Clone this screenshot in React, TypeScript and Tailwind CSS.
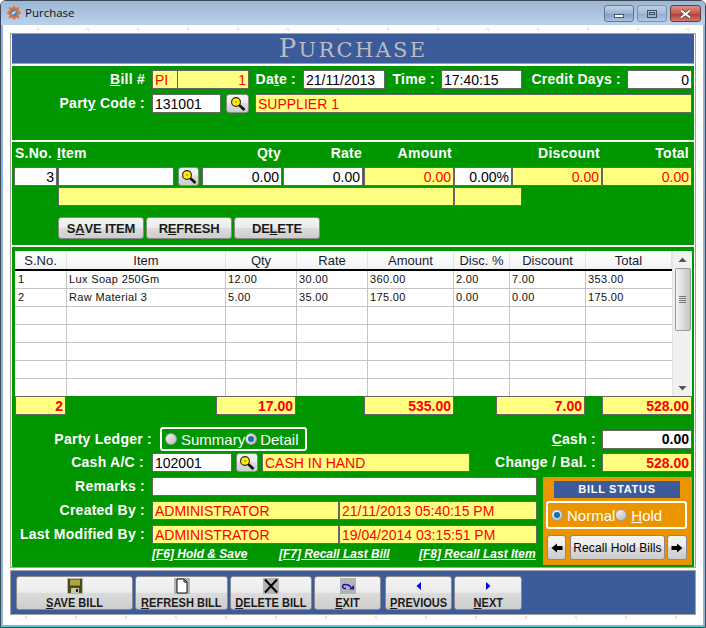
import React from 'react';

const btnBg = 'bg-[linear-gradient(#f4f4f4_0%,#ebebeb_48%,#dcdcdc_50%,#cdcdcd_100%)]';

const Field = ({ w, value = '', tone = 'white', right = false, bold = false, cls = '' }: {
  w: string; value?: string; tone?: 'white' | 'yellow'; right?: boolean; bold?: boolean; cls?: string;
}) => (
  <div
    className={`${w} ${cls} h-[19px] shrink-0 border border-[#666666] flex items-center overflow-hidden whitespace-nowrap text-[14px] leading-none px-[2px] ${
      tone === 'yellow' ? 'bg-[#ffff80] text-[#ff0000]' : 'bg-white text-black'
    } ${right ? 'justify-end' : ''} ${bold ? 'font-bold' : ''}`}
  >
    {value}
  </div>
);

const Label = ({ w, children, cls = '' }: { w: string; children: React.ReactNode; cls?: string }) => (
  <div className={`${w} ${cls} -mt-px shrink-0 text-right text-white font-bold text-[14px] leading-none tracking-[0.25px] whitespace-nowrap`}>
    {children}
  </div>
);

const SearchBtn = ({ w, cls = '' }: { w: string; cls?: string }) => (
  <div className={`${w} ${cls} ${btnBg} h-[19px] shrink-0 border border-[#8a8a8a] rounded-[3px] flex items-center justify-center`}>
    <svg width="16" height="16" viewBox="0 0 16 16">
      <path d="M8.5 8.5 14.5 14" stroke="#111111" strokeWidth="2.6" />
      <circle cx="6" cy="6" r="4.4" fill="#ffee00" stroke="#222222" strokeWidth="1.1" />
      <circle cx="6" cy="6" r="1" fill="#a89600" />
    </svg>
  </div>
);

const Radio = ({ on }: { on?: boolean }) => (
  <span className="w-[12px] h-[12px] shrink-0 rounded-full border border-[#9a9a9a] bg-[linear-gradient(135deg,#f2f2f2,#bcbcbc)] flex items-center justify-center">
    {on && <span className="w-[6px] h-[6px] rounded-full bg-[#1c6fb0]" />}
  </span>
);

const ActionBtn = ({ w, first, rest, pre = '' }: { w: string; first: string; rest: string; pre?: string }) => (
  <div className={`${w} ${btnBg} h-[22px] shrink-0 border border-[#8a8a8a] rounded-[3px] flex items-center justify-center text-[13px] font-bold tracking-[-0.2px] text-[#1a1a1a] leading-none`}>
    {pre}<span className="underline">{first}</span>{rest}
  </div>
);

const BarBtn = ({ w, icon, first, rest }: { w: string; icon: React.ReactNode; first: string; rest: string }) => (
  <div className={`${w} ${btnBg} h-[34px] shrink-0 border border-[#8a8a8a] rounded-[3px] flex flex-col items-center text-[13px] font-bold text-[#1a1a1a] leading-none whitespace-nowrap`}>
    <div className="h-[16px] flex items-center justify-center mt-[1px]">{icon}</div>
    <div className="mt-[2px] scale-x-[0.85]"><span className="underline">{first}</span>{rest}</div>
  </div>
);

const cols = [
  { name: 'S.No.', w: 'w-[52px]' },
  { name: 'Item', w: 'w-[159px]' },
  { name: 'Qty', w: 'w-[71px]' },
  { name: 'Rate', w: 'w-[71px]' },
  { name: 'Amount', w: 'w-[86px]' },
  { name: 'Disc. %', w: 'w-[56px]' },
  { name: 'Discount', w: 'w-[76px]' },
  { name: 'Total', w: 'w-[86px]' },
];

const rows = [
  ['1', 'Lux Soap 250Gm', '12.00', '30.00', '360.00', '2.00', '7.00', '353.00'],
  ['2', 'Raw Material 3', '5.00', '35.00', '175.00', '0.00', '0.00', '175.00'],
  ['', '', '', '', '', '', '', ''],
  ['', '', '', '', '', '', '', ''],
  ['', '', '', '', '', '', '', ''],
  ['', '', '', '', '', '', '', ''],
  ['', '', '', '', '', '', '', ''],
];

const ticks = Array.from({ length: 14 });

const TickRow = ({ cls }: { cls: string }) => (
  <div className={`${cls} h-[4px] flex gap-[47px]`}>
    {ticks.map((_, i) => (
      <svg key={i} width="3" height="4" viewBox="0 0 3 4" className="shrink-0">
        <path d="M0 0h3v4z" fill="#f6dcd2" />
      </svg>
    ))}
  </div>
);

export default function App() {
  return (
    <div className="w-[706px] h-[628px] overflow-hidden bg-white font-['Liberation_Sans',Arial,sans-serif] border border-[#3b4654] rounded-t-[6px] flex flex-col">
      {/* title bar */}
      <div className="h-[24px] shrink-0 bg-[linear-gradient(#9db6d2,#bad2eb)] flex items-center">
        <svg width="16" height="16" viewBox="0 0 16 16" className="ml-[5px] shrink-0">
          <path d="M8 0.5l2 2.5 3.5-1-1 3.5 3 2.5-3 2 1 3.5-3.5-1-2 2.5-2-2.5-3.5 1 1-3.5-3-2 3-2.5-1-3.5 3.5 1z" fill="#e8702e" />
          <circle cx="8" cy="8" r="3.4" fill="#4f86b8" />
          <path d="M5.5 9.5c1-3 3-3.500 5-3-1.500.5-2 1.500-2.500 2.500z" fill="#f0f0f0" />
        </svg>
        <div className="ml-[3px] text-[11.5px] font-['Open_Sans',sans-serif] text-[#111111]">Purchase</div>
        <div className="ml-auto mr-[4px] flex gap-[3px] items-start self-start mt-[4px]">
          <div className="w-[30px] h-[17px] rounded-[3px] border border-[#5f7894] bg-[linear-gradient(#c3d4e7,#98b3d1_50%,#7f9dc0_52%,#a9c2dd)] flex items-end justify-center pb-[3px]">
            <div className="w-[10px] h-[4px] bg-white border border-[#44566c]" />
          </div>
          <div className="w-[30px] h-[17px] rounded-[3px] border border-[#7a93af] bg-[linear-gradient(#bed0e4,#a3bbd6_50%,#90abca_52%,#b0c8e2)] flex items-center justify-center">
            <div className="w-[10px] h-[8px] border border-[#3f4e60] flex items-center justify-center">
              <div className="w-[6px] h-[3px] border border-[#3f4e60]" />
            </div>
          </div>
          <div className="w-[31px] h-[17px] rounded-[3px] border border-[#6f3a38] bg-[linear-gradient(#d9938a,#c8574b_50%,#b23a2f_52%,#cf7a6c)] flex items-center justify-center">
            <svg width="13" height="10" viewBox="0 0 13 10">
              <path d="M2 1.5 11 8.5M11 1.5 2 8.5" stroke="#44302e" strokeWidth="3.4" />
              <path d="M2 1.5 11 8.5M11 1.5 2 8.5" stroke="#ffffff" strokeWidth="2.2" />
            </svg>
          </div>
        </div>
      </div>

      {/* window body */}
      <div className="flex-1 border-x-2 border-b-2 border-x-[#8db7de] border-b-[#62c4e4] flex flex-col pl-[7px]">
        <TickRow cls="mt-[3px] pl-[26px]" />
        <div className="w-[686px] mt-px border border-[#a3a3a3] flex flex-col gap-[2px] px-px">
          {/* heading */}
          <div className="h-[30px] bg-[#3c5b9a] border-b border-[#a3a3a3] flex items-baseline justify-center pt-[1px] font-['DejaVu_Serif',serif] text-[#bcbcc4] leading-none tracking-[2.3px]">
            <span className="text-[26px]">P</span>
            <span className="text-[21px]">URCHASE</span>
          </div>

          {/* bill details */}
          <div className="h-[74px] bg-[#009600] pt-[4px] flex flex-col gap-[5px]">
            <div className="flex items-center h-[19px]">
              <Label w="w-[133px]"><span className="underline">B</span>ill #</Label>
              <div className="ml-[7px] w-[97px] shrink-0 flex">
                <Field w="w-[26px]" tone="yellow" value="PI" />
                <Field w="w-[71px]" tone="yellow" right value="1" cls="border-l-0" />
              </div>
              <Label w="w-[47px]">Da<span className="underline">t</span>e :</Label>
              <Field w="w-[82px]" value="21/11/2013" cls="ml-[7px]" />
              <Label w="w-[50px]">Time :</Label>
              <Field w="w-[81px]" value="17:40:15" cls="ml-[6px]" />
              <Label w="w-[99px]">Credit Days :</Label>
              <Field w="w-[65px]" value="0" right cls="ml-[6px]" />
            </div>
            <div className="flex items-center h-[19px]">
              <Label w="w-[133px]">Part<span className="underline">y</span> Code :</Label>
              <Field w="w-[69px]" value="131001" cls="ml-[7px]" />
              <SearchBtn w="w-[23px]" cls="ml-[5px]" />
              <Field w="w-[437px]" tone="yellow" value="SUPPLIER 1" cls="ml-[6px]" />
            </div>
          </div>

          {/* item entry */}
          <div className="h-[103px] bg-[#009600]">
            <div className="h-[22px] flex items-center pl-[3px] text-white font-bold text-[14px] leading-none tracking-[0.25px]">
              <div className="w-[42px] shrink-0 whitespace-nowrap">S.No.</div>
              <div className="w-[100px] shrink-0"><span className="underline">I</span>tem</div>
              <div className="w-[124px] shrink-0 text-right">Qty</div>
              <div className="w-[81px] shrink-0 text-right">Rate</div>
              <div className="w-[90px] shrink-0 text-right">Amount</div>
              <div className="w-[148px] shrink-0 text-right">Discount</div>
              <div className="w-[89px] shrink-0 text-right">Total</div>
            </div>
            <div className="flex items-center pl-[2px] mt-[3px]">
              <Field w="w-[43px]" value="3" right />
              <Field w="w-[116px]" cls="ml-px" />
              <SearchBtn w="w-[21px]" cls="ml-[4px]" />
              <Field w="w-[80px]" value="0.00" right cls="ml-[3px]" />
              <Field w="w-[80px]" value="0.00" right cls="ml-px" />
              <Field w="w-[90px]" tone="yellow" value="0.00" right cls="ml-px" />
              <Field w="w-[58px]" value="0.00%" right />
              <Field w="w-[90px]" tone="yellow" value="0.00" right />
              <Field w="w-[90px]" tone="yellow" value="0.00" right />
            </div>
            <div className="flex mt-[1px] pl-[46px]">
              <Field w="w-[396px]" tone="yellow" />
              <Field w="w-[68px]" tone="yellow" />
            </div>
            <div className="flex gap-[2px] mt-[11px] pl-[46px]">
              <ActionBtn w="w-[86px]" pre="S" first="A" rest="VE ITEM" />
              <ActionBtn w="w-[86px]" pre="R" first="E" rest="FRESH" />
              <ActionBtn w="w-[86px]" pre="DE" first="L" rest="ETE" />
            </div>
          </div>

          {/* grid and totals */}
          <div className="h-[320px] bg-[#009600] pt-[4px]">
            <div className="ml-[3px] w-[677px] h-[145px] overflow-hidden bg-white flex">
              <div className="w-[657px] shrink-0">
                <div className="h-[20px] flex border-b-2 border-black bg-[linear-gradient(#ffffff,#f7f8f9_60%,#eef0f2)] text-[13px] text-[#1a1a2e] leading-none">
                  {cols.map((c) => (
                    <div key={c.name} className={`${c.w} shrink-0 flex items-center justify-center border-r border-[#dfe3e8]`}>{c.name}</div>
                  ))}
                </div>
                {rows.map((r, i) => (
                  <div key={i} className="h-[18px] flex border-b border-[#c4c4c4] text-[11px] tracking-[0.35px] text-[#111111] leading-none">
                    {r.map((v, j) => (
                      <div key={j} className={`${cols[j].w} shrink-0 flex items-center pl-[2px] first:pl-[3px] border-r border-[#c4c4c4] last:border-r-0`}>{v}</div>
                    ))}
                  </div>
                ))}
              </div>
              <div className="w-[20px] shrink-0 bg-[#f0f0f0] flex flex-col items-center border-l border-[#e4e4e4]">
                <svg width="9" height="5" viewBox="0 0 9 5" className="mt-[6px] shrink-0"><path d="M0.5 5 4.5 0.5 8.5 5z" fill="#555555" /></svg>
                <div className="w-[16px] h-[63px] mt-[6px] rounded-[2px] border border-[#9a9a9a] bg-[linear-gradient(90deg,#f5f5f5,#d8d8d8_55%,#c4c4c4)] flex flex-col items-center justify-center gap-px">
                  <div className="w-[7px] h-px bg-[#777777]" />
                  <div className="w-[7px] h-px bg-[#777777]" />
                  <div className="w-[7px] h-px bg-[#777777]" />
                  <div className="w-[7px] h-px bg-[#777777]" />
                </div>
                <svg width="9" height="5" viewBox="0 0 9 5" className="mt-auto mb-[5px] shrink-0"><path d="M0.5 0 4.5 4.5 8.5 0z" fill="#555555" /></svg>
              </div>
            </div>
            <div className="flex h-[19px] pl-[3px]">
              <Field w="w-[51px]" tone="yellow" value="2" right bold />
              <Field w="w-[80px]" tone="yellow" value="17.00" right bold cls="ml-[150px]" />
              <Field w="w-[90px]" tone="yellow" value="535.00" right bold cls="ml-[68px]" />
              <Field w="w-[89px]" tone="yellow" value="7.00" right bold cls="ml-[42px]" />
              <Field w="w-[90px]" tone="yellow" value="528.00" right bold cls="ml-[17px]" />
            </div>

            <div className="flex items-center h-[24px] mt-[12px]">
              <Label w="w-[140px]">Party Ledger :</Label>
              <div className="ml-[8px] w-[147px] h-[24px] shrink-0 border-2 border-white rounded-[3px] flex items-center pl-[3px] text-white text-[15px] leading-none">
                <Radio />
                <span className="ml-[4px]">Summary</span>
                <Radio on />
                <span className="ml-[3px]">Detail</span>
              </div>
              <Label w="w-[289px]"><span className="underline">C</span>ash :</Label>
              <Field w="w-[90px]" value="0.00" right bold cls="ml-[6px]" />
            </div>
            <div className="flex items-center h-[19px] mt-[2px]">
              <Label w="w-[132px]">Cash A/C :</Label>
              <Field w="w-[80px]" value="102001" cls="ml-[8px]" />
              <SearchBtn w="w-[22px]" cls="ml-[4px]" />
              <Field w="w-[208px]" tone="yellow" value="CASH IN HAND" cls="ml-[4px]" />
              <Label w="w-[126px]">Change / Bal. :</Label>
              <Field w="w-[90px]" tone="yellow" value="528.00" right bold cls="ml-[6px]" />
            </div>

            <div className="flex mt-[5px]">
              <div className="flex flex-col gap-[5px] w-[525px] shrink-0">
                <div className="flex items-center h-[19px]">
                  <Label w="w-[133px]">Remarks :</Label>
                  <Field w="w-[385px]" cls="ml-[7px]" />
                </div>
                <div className="flex items-center h-[19px]">
                  <Label w="w-[133px]">Created By :</Label>
                  <Field w="w-[187px]" tone="yellow" value="ADMINISTRATOR" cls="ml-[7px]" />
                  <Field w="w-[198px]" tone="yellow" value="21/11/2013 05:40:15 PM" />
                </div>
                <div className="flex items-center h-[19px]">
                  <Label w="w-[133px]">Last Modified By :</Label>
                  <Field w="w-[187px]" tone="yellow" value="ADMINISTRATOR" cls="ml-[7px]" />
                  <Field w="w-[198px]" tone="yellow" value="19/04/2014 03:15:51 PM" />
                </div>
                <div className="flex -mt-[1px] pl-[140px] text-white font-bold italic underline text-[12px] leading-none whitespace-nowrap">
                  <span className="w-[127px] shrink-0">[F6] Hold &amp; Save</span>
                  <span className="w-[140px] shrink-0">[F7] Recall Last Bill</span>
                  <span>[F8] Recall Last Item</span>
                </div>
              </div>
              <div className="ml-[6px] w-[149px] h-[88px] shrink-0 bg-[#ea9500] pt-[4px]">
                <div className="ml-[11px] w-[126px] h-[17px] bg-[#3c5b9a] flex items-center justify-center text-white font-bold text-[11px] tracking-[0.7px] leading-none">
                  BILL STATUS
                </div>
                <div className="ml-[3px] mt-[3px] w-[141px] h-[28px] border-2 border-white rounded-[3px] flex items-center pl-[3px] text-white text-[15px] leading-none">
                  <Radio on />
                  <span className="ml-[4px]">Normal</span>
                  <Radio />
                  <span className="ml-[4px]"><span className="underline">H</span>old</span>
                </div>
                <div className="flex mt-[6px] pl-[4px] h-[25px] items-stretch">
                  <div className={`w-[19px] shrink-0 ${btnBg} border border-[#8a8a8a] rounded-[3px] flex items-center justify-center`}>
                    <svg width="12" height="10" viewBox="0 0 12 10"><path d="M0.5 5 6 0.5V3H11.5V7H6V9.5z" fill="#000000" /></svg>
                  </div>
                  <div className={`w-[95px] ml-[4px] shrink-0 ${btnBg} border border-[#8a8a8a] rounded-[3px] flex items-center justify-center text-[12px] tracking-[0.1px] text-black whitespace-nowrap leading-none`}>
                    Recall Hold Bills
                  </div>
                  <div className={`w-[20px] ml-[2px] shrink-0 ${btnBg} border border-[#8a8a8a] rounded-[3px] flex items-center justify-center`}>
                    <svg width="12" height="10" viewBox="0 0 12 10"><path d="M11.5 5 6 0.5V3H0.5V7H6V9.5z" fill="#000000" /></svg>
                  </div>
                </div>
              </div>
            </div>
          </div>
        </div>

        {/* bottom bar */}
        <div className="w-[686px] mt-[2px] h-[45px] border border-[#a3a3a3] bg-[#3c5b9a] flex items-start pt-[5px] pl-[5px] gap-[2px]">
          <BarBtn
            w="w-[117px]"
            first="S"
            rest="AVE BILL"
            icon={
              <svg width="16" height="16" viewBox="0 0 16 16">
                <rect width="16" height="16" fill="#b4b4b4" />
                <rect x="1" y="1" width="14" height="14" fill="#4a4a10" />
                <rect x="3" y="1.5" width="10" height="6" fill="#a8a83c" />
                <rect x="4" y="10" width="8" height="5" fill="#c8c8b0" />
                <rect x="9" y="11" width="2" height="3" fill="#222222" />
              </svg>
            }
          />
          <BarBtn
            w="w-[93px]"
            first="R"
            rest="EFRESH BILL"
            icon={
              <svg width="16" height="16" viewBox="0 0 16 16">
                <rect width="16" height="16" fill="#b4b4b4" />
                <path d="M3 1h7l3 3v11H3z" fill="#ffffff" stroke="#111111" />
                <path d="M10 1v3h3" fill="none" stroke="#111111" />
              </svg>
            }
          />
          <BarBtn
            w="w-[82px]"
            first="D"
            rest="ELETE BILL"
            icon={
              <svg width="16" height="16" viewBox="0 0 16 16">
                <rect width="16" height="16" fill="#b4b4b4" />
                <path d="M2 1.5 14 14.5M14 1.5 2 14.5" stroke="#000000" strokeWidth="2" />
              </svg>
            }
          />
          <BarBtn
            w="w-[67px]"
            first="E"
            rest="XIT"
            icon={
              <svg width="16" height="16" viewBox="0 0 16 16">
                <rect width="16" height="16" fill="#b4b4b4" />
                <path d="M6 10.500H4.500C2 10.500 1.800 6.500 5 6.500c3 0 5 1 6 3" fill="none" stroke="#1616b8" strokeWidth="1.5" />
                <path d="M14 7v4.500H9z" fill="#1616b8" />
              </svg>
            }
          />
          <div className="ml-[2px]">
            <BarBtn
              w="w-[67px]"
              first="P"
              rest="REVIOUS"
              icon={<svg width="6" height="8" viewBox="0 0 6 8"><path d="M5 0v8L0.5 4z" fill="#0000f0" /></svg>}
            />
          </div>
          <BarBtn
            w="w-[68px]"
            first="N"
            rest="EXT"
            icon={<svg width="6" height="8" viewBox="0 0 6 8"><path d="M1 0v8L5.5 4z" fill="#0000f0" /></svg>}
          />
        </div>
        <TickRow cls="mt-[1px] pl-[14px]" />
      </div>
    </div>
  );
}
